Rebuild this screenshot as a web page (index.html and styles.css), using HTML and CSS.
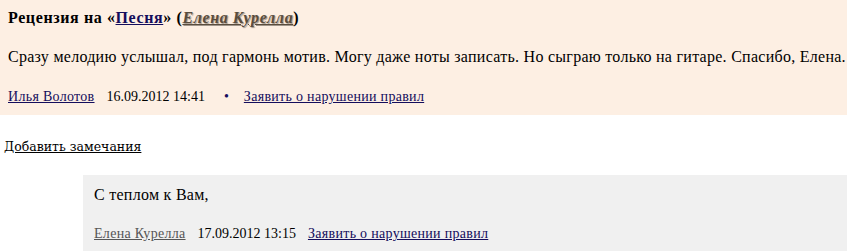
FILE: index.html
```html
<!DOCTYPE html>
<html lang="ru">
<head>
  <meta charset="UTF-8">
  <title>Рецензия</title>
  <link rel="stylesheet" href="styles.css">
</head>
<body>
  <!-- Review -->
  <div class="review">
    <div class="review-title">Рецензия на «<a href="#" class="work-link">Песня</a>» (<a href="#" class="author-link">Елена Курелла</a>)</div>
    <div class="review-text">Сразу мелодию услышал, под гармонь мотив. Могу даже ноты записать. Но сыграю только на гитаре. Спасибо, Елена.</div>
    <div class="meta">
      <a href="#" class="user-link">Илья Волотов</a>
      <span class="date">16.09.2012 14:41</span>
      <span class="dot">•</span>
      <a href="#" class="user-link">Заявить о нарушении правил</a>
    </div>
  </div>

  <div class="add-note">
    <a href="#">Добавить замечания</a>
  </div>

  <!-- Answer -->
  <div class="answer">
    <div class="answer-text">С теплом к Вам,</div>
    <div class="meta answer-meta">
      <a href="#" class="author-plain">Елена Курелла</a>
      <span class="date">17.09.2012 13:15</span>
      <a href="#" class="user-link">Заявить о нарушении правил</a>
    </div>
  </div>
</body>
</html>
```

FILE: styles.css
```css
body {
  margin: 0;
  font-family: "Liberation Serif", "Times New Roman", serif;
  font-size: 16px;
  color: #000;
  background: #fff;
}

a {
  color: #140d5c;
}

/* Review block */
.review {
  background: #fdefe3;
  padding: 8px 8px 9px;
}

.review-title {
  font-weight: bold;
  line-height: 19px;
  letter-spacing: 0.6px;
}

.work-link {
  color: #140d5c;
}

.author-link {
  font-style: italic;
  color: #5a4d3e;
  text-shadow: 1px 1px 1px #a0958a;
}

.review-text {
  margin-top: 20px;
  line-height: 19px;
  letter-spacing: 0.27px;
  white-space: nowrap;
}

.meta {
  margin-top: 21px;
  font-size: 14px;
  line-height: 19px;
  display: flex;
  gap: 12px;
}

.meta a {
  letter-spacing: 0.3px;
}

.dot {
  color: #140d5c;
  padding: 0 3px 0 7px;
}

.add-note {
  margin-top: 22px;
  padding-left: 4px;
  font-family: "DejaVu Serif", serif;
  font-size: 12.5px;
  line-height: 19px;
}

.add-note a {
  color: #000;
}

/* Answer block */
.answer {
  margin: 19px 0 0 83px;
  background: #f0f0f0;
  padding: 10px 10px 8px 11px;
}

.answer-text {
  line-height: 19px;
  letter-spacing: 0.27px;
}

.answer-meta {
  margin-top: 20px;
}

.author-plain {
  color: #555;
}
```
